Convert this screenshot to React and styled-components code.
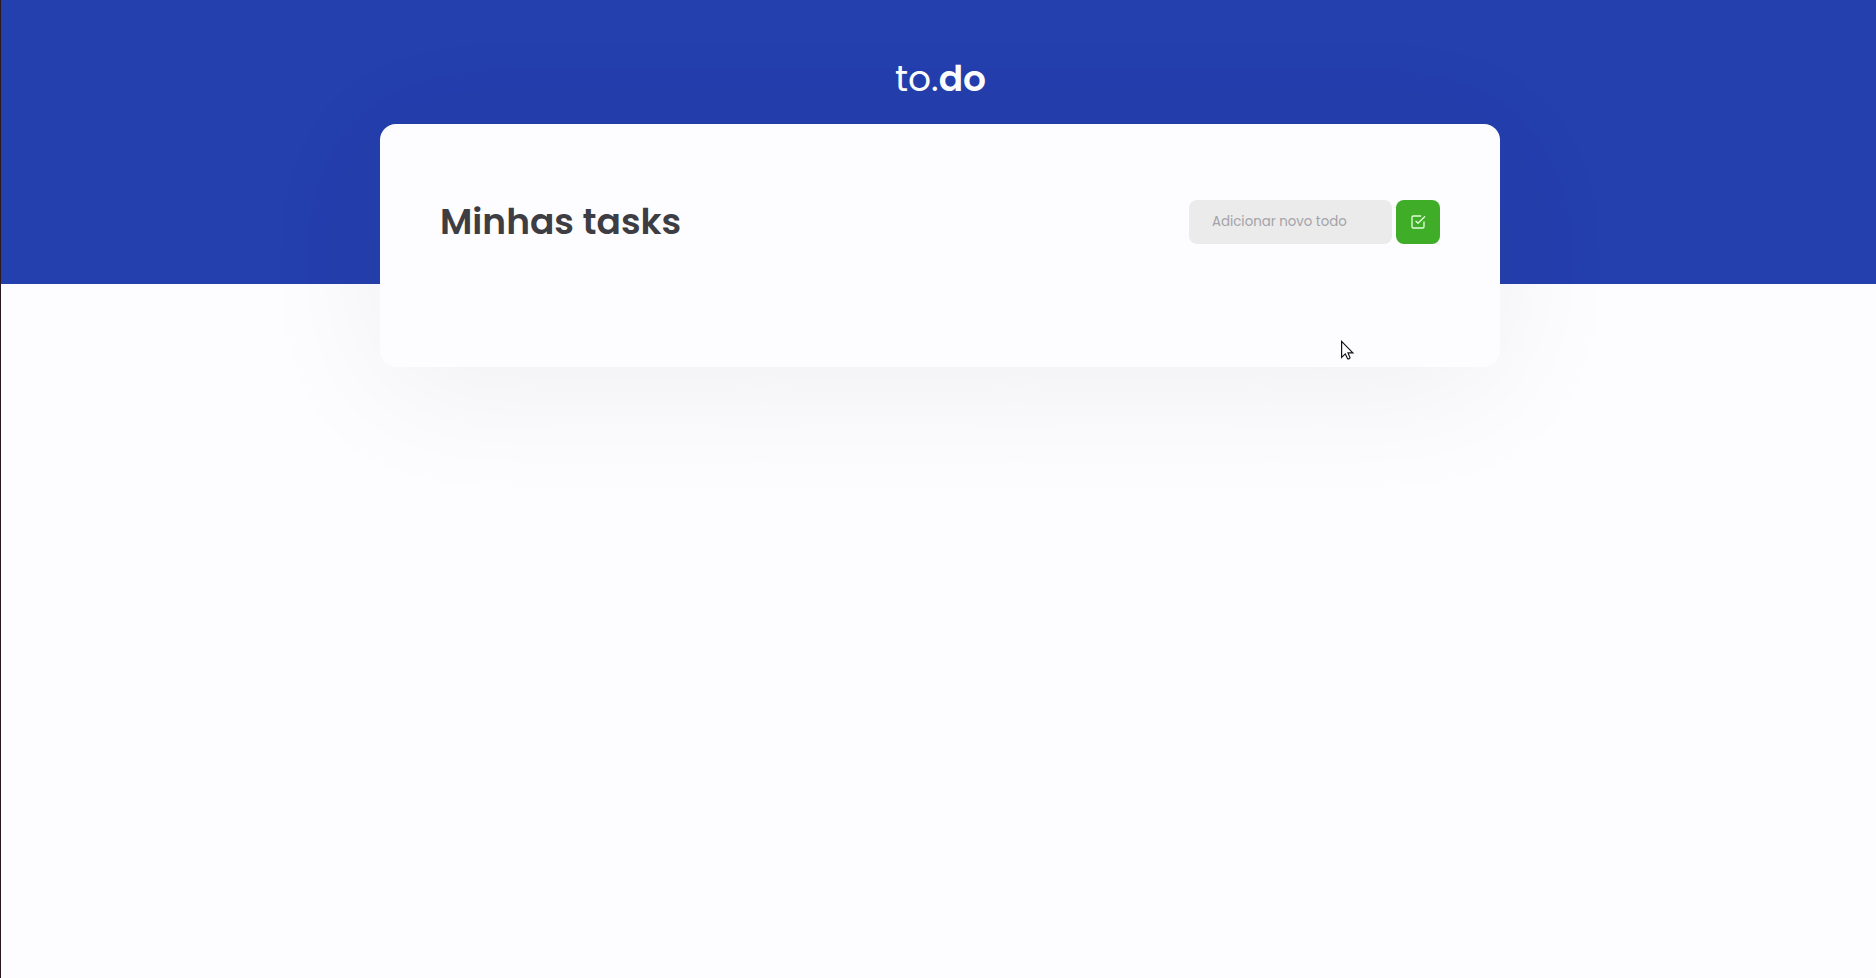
import React from 'react';
import styled, { createGlobalStyle } from 'styled-components';
import { FiCheckSquare } from 'react-icons/fi';

const GlobalStyle = createGlobalStyle`
  * { box-sizing: border-box; margin: 0; padding: 0; }
  body {
    background: #fdfdff;
    font-family: Poppins, "Open Sans", sans-serif;
    -webkit-font-smoothing: antialiased;
  }
`;

const Page = styled.div`
  min-height: 978px;
  border-left: 1px solid #2a1a20;
  overflow: hidden;
`;

const Header = styled.header`
  display: flex;
  justify-content: center;
  align-items: flex-start;
  height: 284px;
  padding: 56px 0 0 4px;
  background: #243fae;
`;

const Logo = styled.div`
  color: #fff;
  font-size: 36px;
  line-height: 46px;
  white-space: nowrap;

  span { font-weight: 600; }
`;

const Content = styled.main`
  display: flex;
  justify-content: center;
  margin-top: -160px;
  padding-left: 3px;
`;

const Card = styled.section`
  width: 1120px;
  height: 243px;
  padding: 76px 60px;
  border-radius: 16px;
  background: #fdfdff;
  box-shadow: 0 20px 140px rgba(0, 0, 0, 0.06);
`;

const Bar = styled.header`
  display: flex;
  justify-content: space-between;
  align-items: center;
  height: 44px;
`;

const Title = styled.h2`
  color: #3d3d43;
  font-size: 36px;
  line-height: 44px;
  font-weight: 600;
`;

const Form = styled.div`
  display: flex;
  gap: 4px;
`;

const TaskInput = styled.input`
  width: 203px;
  height: 44px;
  padding: 0 24px 0 23px;
  border: 0;
  border-radius: 8px;
  outline: 0;
  background: #ebebeb;
  color: #3d3d43;
  font: 400 13.333px Poppins, "Open Sans", sans-serif;

  &::placeholder { color: #a4a2aa; opacity: 1; }
`;

const AddButton = styled.button`
  display: flex;
  align-items: center;
  justify-content: center;
  width: 44px;
  height: 44px;
  border: 0;
  border-radius: 8px;
  background: #3fad27;
  color: #e0ffd8;
`;

const Pointer = styled.svg`
  position: absolute;
  left: 1341px;
  top: 340px;
  width: 13px;
  height: 21px;
`;

export default function App() {
  return (
    <>
      <GlobalStyle />
      <Page>
        <Header>
          <Logo>to.<span>do</span></Logo>
        </Header>
        <Content>
          <Card>
            <Bar>
              <Title>Minhas tasks</Title>
              <Form>
                <TaskInput type="text" placeholder="Adicionar novo todo" />
                <AddButton type="button" aria-label="Adicionar">
                  <FiCheckSquare size={16} />
                </AddButton>
              </Form>
            </Bar>
          </Card>
        </Content>
      </Page>
      <Pointer viewBox="0 0 13 21" aria-hidden="true">
        <path
          d="M.6 1.4v16l3.7-3.5 2.3 4.8c.9.6 2.4-.1 2.4-1.2L7 12.9h4.9z"
          fill="#fff"
          stroke="#111"
          strokeWidth="1.2"
        />
      </Pointer>
    </>
  );
}
